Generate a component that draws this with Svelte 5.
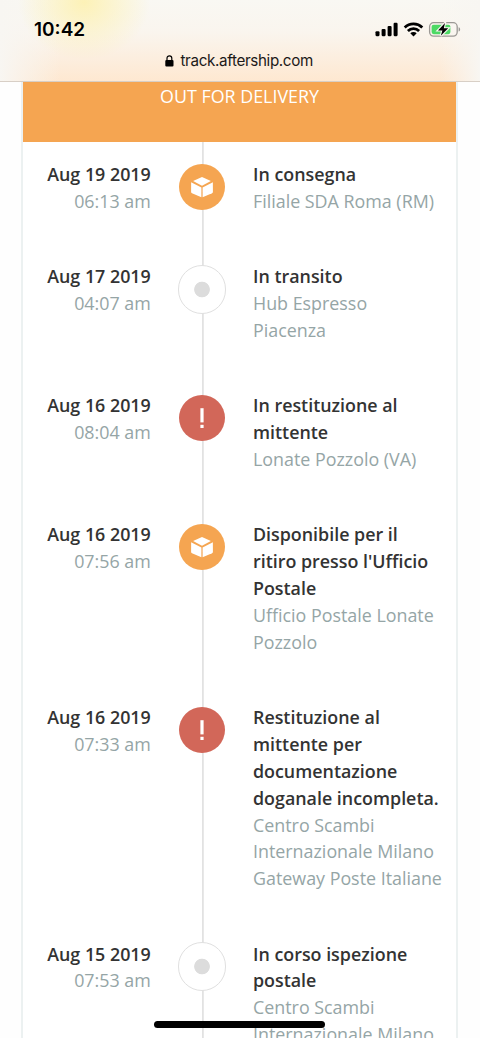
<script lang="ts">
interface Checkpoint {
	id: number;
	date: string;
	time: string;
	status: 'delivery' | 'transit' | 'exception';
	message: string[];
	location: string[];
}

const checkpoints: Checkpoint[] = [
	{
		id: 1,
		date: 'Aug 19 2019',
		time: '06:13 am',
		status: 'delivery',
		message: ['In consegna'],
		location: ['Filiale SDA Roma (RM)'],
	},
	{
		id: 2,
		date: 'Aug 17 2019',
		time: '04:07 am',
		status: 'transit',
		message: ['In transito'],
		location: ['Hub Espresso', 'Piacenza'],
	},
	{
		id: 3,
		date: 'Aug 16 2019',
		time: '08:04 am',
		status: 'exception',
		message: ['In restituzione al', 'mittente'],
		location: ['Lonate Pozzolo (VA)'],
	},
	{
		id: 4,
		date: 'Aug 16 2019',
		time: '07:56 am',
		status: 'delivery',
		message: ['Disponibile per il', "ritiro presso l'Ufficio", 'Postale'],
		location: ['Ufficio Postale Lonate', 'Pozzolo'],
	},
	{
		id: 5,
		date: 'Aug 16 2019',
		time: '07:33 am',
		status: 'exception',
		message: ['Restituzione al', 'mittente per', 'documentazione', 'doganale incompleta.'],
		location: ['Centro Scambi', 'Internazionale Milano', 'Gateway Poste Italiane'],
	},
	{
		id: 6,
		date: 'Aug 15 2019',
		time: '07:53 am',
		status: 'transit',
		message: ['In corso ispezione', 'postale'],
		location: ['Centro Scambi', 'Internazionale Milano'],
	},
];
</script>

<div class="screen">
	<header class="browser-bar">
		<div class="status-bar">
			<span class="clock">10:42</span>
			<svg class="signals" width="88" height="18" viewBox="0 0 88 18" aria-hidden="true">
				<!-- Cellular -->
				<rect x="1.5" y="10.2" width="4" height="5" rx="1.1" />
				<rect x="7.6" y="8" width="4" height="7.2" rx="1.1" />
				<rect x="13.6" y="5" width="4" height="10.2" rx="1.1" />
				<rect x="19.6" y="1.8" width="4" height="13.4" rx="1.1" />
				<!-- Wifi -->
				<g fill="none" stroke="#000" stroke-width="2.8">
					<path d="M30.7 6.4 A12.8 12.8 0 0 1 48.3 6.4" />
					<path d="M33.9 9.9 A8 8 0 0 1 45.1 9.9" />
				</g>
				<path d="M36.3 12.3 A4.5 4.5 0 0 1 42.7 12.3 L39.5 15.4 Z" />
				<!-- Battery, charging -->
				<rect x="55.6" y="1.7" width="27.6" height="13.4" rx="4" fill="none" stroke="#9b9894" stroke-width="1.3" />
				<path d="M84.6 6.2 C86.6 6.8 86.6 10 84.6 10.6 Z" fill="#9b9894" />
				<rect x="57.6" y="3.7" width="18.8" height="9.5" rx="2.1" fill="#4cd964" />
				<path
					d="M71 2 L64 9.4 H68.4 L66.8 14.8 L74.2 7.3 H69.8 Z"
					stroke="#faf7f2"
					stroke-width="2.2"
					paint-order="stroke"
				/>
			</svg>
		</div>
		<div class="address">
			<svg width="9" height="12" viewBox="0 0 9 12" aria-hidden="true">
				<rect x="0.3" y="4.9" width="8.2" height="6.6" rx="1.1" />
				<path d="M2 5.5 V3.2 A2.4 2.4 0 0 1 6.8 3.2 V5.5" fill="none" stroke="#000" stroke-width="1.2" />
			</svg>
			<span>track.aftership.com</span>
		</div>
	</header>

	<main class="card">
		<h1 class="banner">OUT FOR DELIVERY</h1>
		<ol class="timeline">
			{#each checkpoints as point (point.id)}
				<li class="checkpoint">
					<div class="when">
						<strong>{point.date}</strong>
						<span>{point.time}</span>
					</div>
					<div class="marker">
						<span class="dot {point.status}">
							{#if point.status === 'delivery'}
								<svg width="24" height="24" viewBox="0 0 24 24" fill="#fff" aria-hidden="true">
									<path d="M12 1.9 L20.9 6 L12 10.7 L3.1 6 Z" />
									<path d="M1.1 7.3 L11.4 12.4 V22.3 L2 18.3 Q1.1 17.9 1.1 17 Z" />
									<path d="M22.9 7.3 L12.6 12.4 V22.3 L22 18.3 Q22.9 17.9 22.9 17 Z" />
								</svg>
							{:else if point.status === 'exception'}
								<svg width="6" height="22" viewBox="0 0 6 22" fill="#fff" aria-hidden="true">
									<rect x="1.4" y="1.2" width="3.2" height="14.2" />
									<rect x="1.4" y="17.8" width="3.2" height="3.2" />
								</svg>
							{/if}
						</span>
					</div>
					<div class="what">
						<strong>
							{#each point.message as line}<span>{line}</span>{/each}
						</strong>
						{#each point.location as line}<span>{line}</span>{/each}
					</div>
				</li>
			{/each}
		</ol>
	</main>

	<div class="home-indicator"></div>
</div>

<style>
	:global(body) {
		background: #fff;
	}

	.screen {
		position: relative;
		display: flex;
		flex-direction: column;
		width: 480px;
		height: 1038px;
		overflow: hidden;
		background: #fefefe;
		font-family: 'Open Sans', 'Noto Sans', sans-serif;
	}

	/* Translucent browser chrome */
	.browser-bar {
		box-sizing: border-box;
		flex: none;
		height: 82px;
		border-bottom: 1px solid #d8cfc6;
		background:
			radial-gradient(ellipse 66px 58px at 84px 2px, rgba(253, 241, 176, 0.9), rgba(253, 241, 176, 0)),
			linear-gradient(90deg, #f8f6f2 0, rgba(248, 246, 242, 0) 60px, rgba(248, 246, 242, 0) 440px, #f8f6f2 100%),
			linear-gradient(#f9f8f3 0, #faf5ee 40%, #fee8d1 100%);
		font-family: Inter, 'Liberation Sans', sans-serif;
		color: #000;
	}

	.status-bar {
		display: flex;
		justify-content: space-between;
		align-items: flex-start;
		height: 50px;
		padding: 0 18px 0 34px;
	}

	.clock {
		margin-top: 18px;
		font-size: 19px;
		font-weight: 600;
		line-height: 24px;
	}

	.signals {
		margin: 21px 0 0;
	}

	.address {
		display: flex;
		align-items: center;
		height: 22px;
		padding-left: 165px;
		gap: 6.5px;
		font-size: 15.2px;
		letter-spacing: -0.35px;
		line-height: 22px;
		color: #1c1a19;
	}

	/* Tracking card */
	.card {
		flex: 1;
		min-height: 0;
		width: 433px;
		margin-left: 21px;
		border: solid #ecf1f1;
		border-width: 0 2px;
		background: #fff;
	}

	.banner {
		box-sizing: border-box;
		height: 60.4px;
		margin: 0;
		padding-top: 1px;
		background: #f5a551;
		color: #fff;
		font-size: 17.88px;
		font-weight: 400;
		line-height: 26.88px;
		text-align: center;
	}

	.timeline {
		margin: 0;
		padding: 18.7px 0 0;
		list-style: none;
		background: linear-gradient(#e2e2e2, #e2e2e2) 178.7px 0 / 1.8px 100% no-repeat;
		font-size: 17.86px;
		line-height: 26.88px;
		color: #95a5a6;
	}

	.checkpoint {
		display: grid;
		grid-template-columns: 127.8px 102.2px 1fr;
		margin-bottom: 48.4px;
	}

	.when {
		text-align: right;
	}

	strong {
		font-weight: 600;
		color: #333;
	}

	.when strong,
	.when span,
	.what strong,
	.what span {
		display: block;
		white-space: nowrap;
	}

	.marker {
		display: flex;
		justify-content: center;
		align-items: center;
		height: 52.2px;
	}

	.dot {
		box-sizing: border-box;
		display: flex;
		justify-content: center;
		align-items: center;
		width: 46px;
		height: 46px;
		border-radius: 50%;
	}

	.dot.delivery {
		background: #f5a551;
	}

	.dot.exception {
		background: #d26759;
	}

	.dot.transit {
		width: 48.5px;
		height: 48.5px;
		border: 1.4px solid #e0e0e0;
		background: radial-gradient(circle, #dcdcdc 7.4px, #fff 8.2px);
	}

	/* Home indicator floats over the page */
	.home-indicator {
		position: absolute;
		bottom: 10.5px;
		left: 154px;
		width: 171px;
		height: 6.5px;
		border-radius: 4px;
		background: #000;
	}
</style>
